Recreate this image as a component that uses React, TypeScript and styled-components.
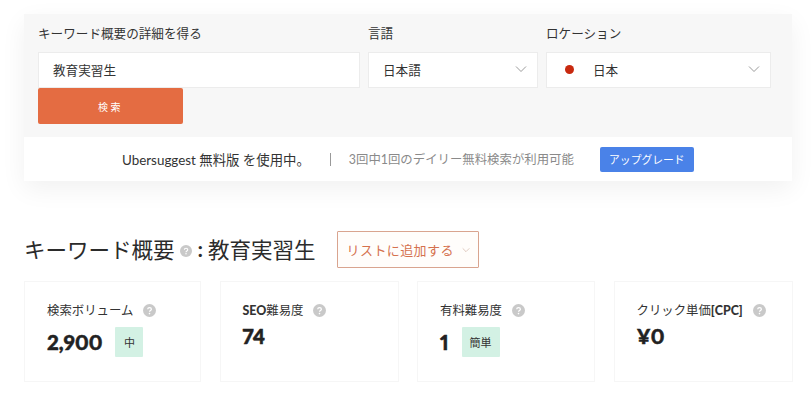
import styled, { createGlobalStyle } from "styled-components";

const GlobalStyle = createGlobalStyle`
  html, body {
    margin: 0;
    padding: 0;
    background: #fff;
    height: 405px;
    overflow: hidden;
  }
  body {
    font-family: "Lato", "Noto Sans CJK JP", sans-serif;
    color: #2b2b2b;
  }
`;

const Page = styled.div`
  width: 811px;
  height: 405px;
  padding: 14px 19px 0 24px;
  box-sizing: border-box;
  overflow: hidden;
`;

const SearchCard = styled.section`
  box-shadow: 0 8px 24px rgba(0, 0, 0, 0.06);
`;

const SearchForm = styled.div`
  height: 123px;
  box-sizing: border-box;
  background: #f7f7f7;
  padding: 11px 21px 0 14px;
`;

const FieldRow = styled.div`
  display: grid;
  grid-template-columns: 322px 170px 225px;
  column-gap: 8px;
`;

const Field = styled.div`
  display: flex;
  flex-direction: column;
`;

const FieldLabel = styled.label`
  font-size: 12.6px;
  line-height: 16px;
  height: 26px;
  padding-top: 1px;
  color: #333;
`;

const InputBox = styled.div`
  height: 36px;
  box-sizing: border-box;
  background: #fff;
  border: 1px solid #ececec;
  display: flex;
  align-items: center;
  padding: 0 14px 2px;
  font-size: 12.6px;
  color: #333;
`;

const SelectBox = styled(InputBox)`
  justify-content: space-between;
  padding: 0 10px 2px ${(p: { $inset?: number }) => p.$inset ?? 14}px;
`;

const FlagValue = styled.span`
  display: flex;
  align-items: center;
  gap: 19px;
`;

const FlagDot = styled.span`
  width: 9px;
  height: 9px;
  border-radius: 50%;
  background: #c8290f;
`;

const SearchButton = styled.button`
  display: block;
  width: 145px;
  height: 36px;
  border: 0;
  border-radius: 2px;
  background: #e46c42;
  color: #fff;
  font: inherit;
  font-size: 10px;
  letter-spacing: 2.5px;
  padding: 0;
`;

const Notice = styled.div`
  height: 44px;
  background: #fff;
  display: flex;
  align-items: center;
  padding-left: 98px;
  font-size: 13.4px;
`;

const NoticeLead = styled.span`
  color: #333;
`;

const Divider = styled.span`
  width: 1px;
  height: 13px;
  background: #999;
  margin: 0 18px 0 20px;
`;

const NoticeInfo = styled.span`
  color: #8a8a8a;
  font-size: 12.4px;
`;

const UpgradeButton = styled.button`
  margin-left: 26px;
  width: 94px;
  height: 25px;
  border: 0;
  border-radius: 2px;
  background: #4a82e8;
  color: #fff;
  font: inherit;
  font-size: 10.8px;
  padding: 0;
`;

const TitleRow = styled.div`
  display: flex;
  align-items: center;
  margin-top: 50px;
  height: 37px;
`;

const Title = styled.h2`
  margin: 0 0 2px;
  font-size: 21.5px;
  font-weight: 400;
  display: flex;
  align-items: center;
  color: #2b2b2b;
  white-space: nowrap;
`;

const TitleHelp = styled.span`
  display: flex;
  margin: 4px 0 0 5px;
`;

const TitleColon = styled.b`
  margin: 0 5px 0 6px;
`;

const AddButton = styled.button`
  margin-left: 21px;
  width: 142px;
  height: 37px;
  box-sizing: border-box;
  background: #fffdfb;
  border: 1px solid #d9a48f;
  border-radius: 1px;
  color: #d5714e;
  font: inherit;
  font-size: 13px;
  letter-spacing: 0.4px;
  display: flex;
  align-items: center;
  justify-content: space-between;
  padding: 0 8px 0 9px;
`;

const Metrics = styled.div`
  display: grid;
  grid-template-columns: 177px 179px 178px 179px;
  column-gap: 18.5px;
  margin-top: 13px;
`;

const MetricCard = styled.div`
  height: 101px;
  box-sizing: border-box;
  border: 1px solid #f6f6f6;
  padding: 19px 0 0 22px;
`;

const MetricLabel = styled.div`
  display: flex;
  align-items: center;
  height: 18px;
  font-size: 12.4px;
  color: #333;
  gap: 10px;
`;

const LabelStrong = styled.b`
  font-weight: 900;
`;

const ValueRow = styled.div`
  display: flex;
  align-items: center;
  gap: 13px;
  margin-top: 8px;
`;

const MetricValue = styled.div`
  font-size: 20.5px;
  font-weight: 900;
  line-height: 19px;
  color: #222;
  font-variant-numeric: proportional-nums;
  -webkit-text-stroke: 0.5px #222;
`;

const Badge = styled.span`
  height: 30px;
  min-width: 28px;
  padding: 0 8px;
  box-sizing: border-box;
  background: #d3f1e4;
  border-radius: 1px;
  display: flex;
  align-items: center;
  justify-content: center;
  font-size: 11px;
  color: #333;
`;

function Chevron({ size = 12, color = "#8e8e8e" }: { size?: number; color?: string }) {
  return (
    <svg width={size} height={size} viewBox="0 0 12 12" fill="none" aria-hidden="true">
      <path d="M1 3.5 L6 8.5 L11 3.5" stroke={color} strokeWidth="0.9" />
    </svg>
  );
}

function HelpIcon({ size = 13 }: { size?: number }) {
  return (
    <svg width={size} height={size} viewBox="0 0 13 13" aria-hidden="true">
      <circle cx="6.5" cy="6.5" r="6.5" fill="#c9c9c9" />
      <path
        d="M4.7 5.2 C4.7 3 8.4 3 8.4 5.2 C8.4 6.5 6.5 6.4 6.5 7.8"
        fill="none"
        stroke="#fff"
        strokeWidth="1.2"
      />
      <circle cx="6.5" cy="9.6" r="0.8" fill="#fff" />
    </svg>
  );
}

const metrics = [
  { label: <>検索ボリューム</>, value: "2,900", badge: "中" },
  { label: <><LabelStrong>SEO</LabelStrong>難易度</>, value: "74" },
  { label: <>有料難易度</>, value: "1", badge: "簡単" },
  { label: <>クリック単価<LabelStrong>[CPC]</LabelStrong></>, value: "¥0" },
];

export default function App() {
  return (
    <Page>
      <GlobalStyle />
      <SearchCard>
        <SearchForm>
          <FieldRow>
            <Field>
              <FieldLabel>キーワード概要の詳細を得る</FieldLabel>
              <InputBox>教育実習生</InputBox>
            </Field>
            <Field>
              <FieldLabel>言語</FieldLabel>
              <SelectBox>
                日本語
                <Chevron />
              </SelectBox>
            </Field>
            <Field>
              <FieldLabel>ロケーション</FieldLabel>
              <SelectBox $inset={18}>
                <FlagValue>
                  <FlagDot />
                  日本
                </FlagValue>
                <Chevron />
              </SelectBox>
            </Field>
          </FieldRow>
          <SearchButton>検索</SearchButton>
        </SearchForm>
        <Notice>
          <NoticeLead>Ubersuggest 無料版 を使用中。</NoticeLead>
          <Divider />
          <NoticeInfo>3回中1回のデイリー無料検索が利用可能</NoticeInfo>
          <UpgradeButton>アップグレード</UpgradeButton>
        </Notice>
      </SearchCard>

      <TitleRow>
        <Title>
          キーワード概要
          <TitleHelp>
            <HelpIcon size={12} />
          </TitleHelp>
          <TitleColon>:</TitleColon>
          教育実習生
        </Title>
        <AddButton>
          リストに追加する
          <Chevron size={8} color="#c9a899" />
        </AddButton>
      </TitleRow>

      <Metrics>
        {metrics.map((m) => (
          <MetricCard key={m.value}>
            <MetricLabel>
              <span>{m.label}</span>
              <HelpIcon />
            </MetricLabel>
            <ValueRow>
              <MetricValue>{m.value}</MetricValue>
              {m.badge && <Badge>{m.badge}</Badge>}
            </ValueRow>
          </MetricCard>
        ))}
      </Metrics>
    </Page>
  );
}
